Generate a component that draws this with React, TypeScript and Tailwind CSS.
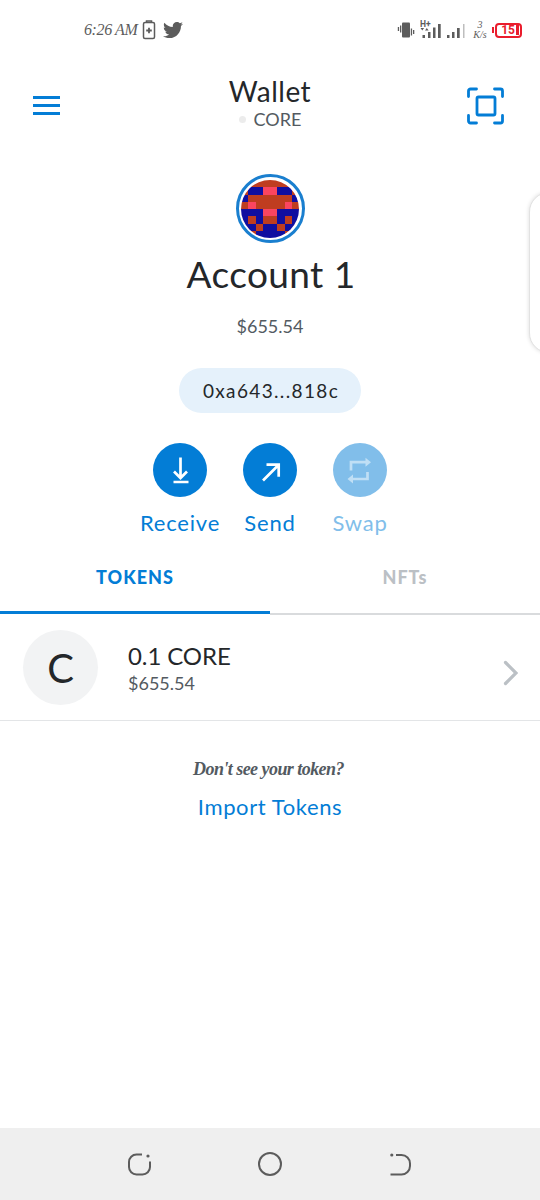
import type { ReactNode } from "react";
import { FaTwitter } from "react-icons/fa";

const BLUE = "#100ea0";
const RUST = "#bf3d20";
const PINK = "#fb4560";

// 8x8 blockie, one string per row: b = blue, r = rust, p = pink
const BLOCKIE = [
  "rrrrrrrr",
  "rbbppbbr",
  "brrrrrrb",
  "rprrrrpr",
  "bbbppbbb",
  "brbrrbrb",
  "bbrbbrbb",
  "brbbbbrb",
];

const COLORS: Record<string, string> = { b: BLUE, r: RUST, p: PINK };

export default function App() {
  return (
    <div className="relative flex h-[1200px] w-[540px] flex-col overflow-hidden bg-white font-['Lato','Liberation_Sans',sans-serif] text-[#24272a]">
      <StatusBar />
      <Header />
      <AccountOverview />
      <Tabs />
      <TokenRow />

      <div className="flex flex-1 flex-col items-center pt-[36px]">
        <p className="pr-[3px] font-['Liberation_Serif',serif] text-[18px] leading-[24px] font-bold italic tracking-[-0.55px] text-[#535a61]">
          Don't see your token?
        </p>
        <button type="button" className="mt-[12px] text-[22px] leading-[28px] tracking-[0.6px] text-[#037dd6]">
          Import Tokens
        </button>
      </div>

      <NavBar />

      {/* Edge panel handle */}
      <div className="absolute top-[192px] left-[529px] h-[161px] w-[40px] rounded-[20px] border border-[#e2e2e2] bg-white shadow-[0_0_4px_rgba(0,0,0,0.14)]" />
    </div>
  );
}

function StatusBar() {
  return (
    <div className="flex h-[60px] items-center justify-between pr-[18px] pl-[84px] text-[#5c5c5c]">
      <div className="flex items-center">
        <span className="w-[58px] font-['Liberation_Serif',serif] text-[16px] italic tracking-[-0.4px] whitespace-nowrap">
          6:26 AM
        </span>
        <svg width="14" height="20" viewBox="0 0 14 20" fill="none" stroke="currentColor" strokeWidth="1.5">
          <path d="M4.5 2V1h5v1" />
          <rect x="1.5" y="2.5" width="11" height="16" rx="1.5" />
          <path d="M4.2 10.5h5.6M7 7.7v5.6" strokeWidth="1.8" />
        </svg>
        <FaTwitter className="ml-[7px] h-[20px] w-[20px]" />
      </div>

      <div className="flex items-center">
        <svg width="18" height="18" viewBox="0 0 18 18" fill="currentColor">
          <rect x="5" y="1.5" width="8" height="15" rx="1" />
          <path d="M3 4.5h1.3v7H3zM.8 6h1.3v4H.8zM13.8 7.5h1.3v7h-1.3zM16 9h1.3v4H16z" />
        </svg>
        <svg className="ml-[5px]" width="45" height="20" viewBox="0 0 45 20" fill="currentColor">
          <text x="0" y="6.5" fontSize="8.5" fontWeight="700" fontFamily="Roboto, sans-serif">
            H+
          </text>
          <path d="M.5 8h3.6L2.3 10.5zM5 10.5h3.6L6.8 8z" />
          <path d="M2.5 15H5v3H2.5zM8 12h2.5v6H8zM13 7.5h2.5V18H13zM18 4h2.7v14H18z" />
          <path d="M27 15h2.5v3H27zM32 12h2.5v6H32zM37 8h2.7v10H37z" />
          <path d="M43 4h1.5v14H43z" opacity=".4" />
        </svg>
        <div className="ml-[8px] flex w-[14px] flex-col items-center font-['Liberation_Serif',serif] text-[10px] leading-[10px] italic">
          <span>3</span>
          <span>K/s</span>
        </div>
        <div className="ml-[5px] flex items-center text-[#ea1c2c]">
          <span className="mr-[1px] h-[6px] w-[2px] bg-current" />
          <div className="flex h-[15px] w-[27px] items-center justify-end gap-[1px] rounded-[4px] border-2 border-current pr-[1px] font-['Roboto',sans-serif] text-[12px] font-bold">
            15
            <span className="h-[10px] w-[3px] bg-current" />
          </div>
        </div>
      </div>
    </div>
  );
}

function Header() {
  return (
    <header className="flex h-[90px] items-center justify-between pr-[35px] pl-[33px]">
      <button type="button" aria-label="Menu" className="flex w-[42px] flex-col gap-[5px]">
        <span className="h-[3px] w-[27px] bg-[#037dd6]" />
        <span className="h-[3px] w-[27px] bg-[#037dd6]" />
        <span className="h-[3px] w-[27px] bg-[#037dd6]" />
      </button>
      <div className="flex flex-col items-center pb-[4px]">
        <h1 className="text-[28px] leading-[32px] tracking-[0.5px]">Wallet</h1>
        <div className="flex items-center gap-[8px] text-[18px] leading-[24px] text-[#535a61]">
          <span className="h-[7px] w-[7px] rounded-full bg-[#ececec]" />
          CORE
        </div>
      </div>
      <button type="button" aria-label="Scan" className="pt-[1px] text-[#037dd6]">
        <svg width="40" height="38" viewBox="0 0 40 38" fill="none" stroke="currentColor" strokeWidth="2.8" strokeLinecap="round" strokeLinejoin="round">
          <path d="M3.5 9.5V4a2 2 0 0 1 2-2H11.500M29.500 2H35.500a2 2 0 0 1 2 2V9.500M37.500 28.500V34a2 2 0 0 1-2 2H29.500M11.500 36H5.500a2 2 0 0 1-2-2V28.500" />
          <rect x="12" y="10" width="18" height="18" rx="1.5" />
        </svg>
      </button>
    </header>
  );
}

function AccountOverview() {
  return (
    <section className="flex h-[395px] flex-col items-center pt-[24px]">
      <div className="flex h-[69px] w-[69px] items-center justify-center rounded-full border-[3px] border-[#1a7fcf]">
        <Blockie />
      </div>
      <h2 className="mt-[9px] pl-[2px] text-[37px] leading-[44px] tracking-[0.4px]">Account 1</h2>
      <p className="mt-[18px] text-[18px] leading-[24px] text-[#535a61]">$655.54</p>
      <div className="mt-[30px] flex h-[45px] w-[182px] items-center justify-center rounded-full bg-[#e5f1fb] pt-[1px] pl-[2px] text-[19px] tracking-[1.35px]">
        0xa643...818c
      </div>

      <div className="mt-[30px] flex">
        <Action label="Receive">
          <path d="M27.5 14.5v21M21 28.5l6.5 6.5 6.5-6.5M20.5 39h15" />
        </Action>
        <Action label="Send">
          <path d="M20 37.500L35.500 22M23.500 21.700h12.200v12" />
        </Action>
        <Action label="Swap" disabled>
          <path d="M18 27.500V19.200h15M34.500 29v7H20" />
          <path d="M32.500 14.700v9l5.500-4.500zM20 31.500v9l-5.500-4.500z" fill="currentColor" stroke="none" />
        </Action>
      </div>
    </section>
  );
}

function Action({ label, disabled = false, children }: { label: string; disabled?: boolean; children: ReactNode }) {
  return (
    <button type="button" disabled={disabled} className="flex w-[90px] flex-col items-center">
      <span
        className={
          disabled
            ? "h-[54px] w-[54px] rounded-full bg-[#81beea] text-[#c0dff5]"
            : "h-[54px] w-[54px] rounded-full bg-[#037dd6] text-white"
        }
      >
        <svg width="54" height="54" viewBox="0 0 54 54" fill="none" stroke="currentColor" strokeWidth="2.7">
          {children}
        </svg>
      </span>
      <span
        className={
          disabled
            ? "mt-[12px] text-[22px] leading-[28px] tracking-[0.8px] text-[#81beea]"
            : "mt-[12px] text-[22px] leading-[28px] tracking-[0.8px] text-[#037dd6]"
        }
      >
        {label}
      </span>
    </button>
  );
}

function Blockie() {
  return (
    <svg className="h-[58px] w-[58px] rounded-full" viewBox="0 0 8 8" shapeRendering="crispEdges">
      {BLOCKIE.map((row, y) =>
        row.split("").map((cell, x) => (
          <rect key={`${x}-${y}`} x={x} y={y} width="1" height="1" fill={COLORS[cell]} />
        )),
      )}
    </svg>
  );
}

function Tabs() {
  return (
    <div className="flex h-[70px] items-start text-[18px] leading-[24px] font-black">
      <div className="flex h-[69px] flex-1 justify-center border-b-[3px] border-[#037dd6] pt-[20px] tracking-[1px] text-[#037dd6]">
        TOKENS
      </div>
      <div className="flex h-[70px] flex-1 justify-center border-b-2 border-[#d9dbdd] pt-[20px] tracking-[1px] text-[#bbc0c5]">
        NFTs
      </div>
    </div>
  );
}

function TokenRow() {
  return (
    <div className="flex h-[106px] items-center border-b border-[#e3e5e7] pr-[22px] pl-[23px]">
      <div className="flex h-[75px] w-[75px] items-center justify-center rounded-full bg-[#f2f3f4] text-[40px]">
        C
      </div>
      <div className="ml-[30px] flex-1">
        <p className="text-[24px] leading-[30px] tracking-[-0.1px]">0.1 CORE</p>
        <p className="text-[18px] leading-[24px] text-[#535a61]">$655.54</p>
      </div>
      <svg className="mt-[10px]" width="15" height="26" viewBox="0 0 15 26" fill="none" stroke="#bbc0c5" strokeWidth="3.2" strokeLinecap="round">
        <path d="M2.5 2.500L13 13 2.500 23.500" />
      </svg>
    </div>
  );
}

function NavBar() {
  return (
    <nav className="flex h-[72px] items-center justify-between bg-[#efefef] pr-[128px] pl-[126px] text-[#5c5c5c]">
      <svg width="25" height="25" viewBox="0 0 25 25" fill="none" stroke="currentColor" strokeWidth="2">
        <path d="M16 2.500H10.500a7.500 7.500 0 0 0-7.500 7.500v5a7.500 7.500 0 0 0 7.500 7.500h6a7.500 7.500 0 0 0 7.500-7.500V9.500" />
        <circle cx="22" cy="4" r="1.6" fill="currentColor" stroke="none" />
      </svg>
      <svg width="25" height="25" viewBox="0 0 25 25" fill="none" stroke="currentColor" strokeWidth="2">
        <circle cx="13" cy="12" r="11" />
      </svg>
      <svg width="25" height="25" viewBox="0 0 25 25" fill="none" stroke="currentColor" strokeWidth="2">
        <path d="M9 3H14.500a8.500 8.500 0 0 1 8.500 8.500v2.500a8.500 8.500 0 0 1-8.500 8.500H3.500" />
        <circle cx="4.8" cy="3" r="1.6" fill="currentColor" stroke="none" />
      </svg>
    </nav>
  );
}
